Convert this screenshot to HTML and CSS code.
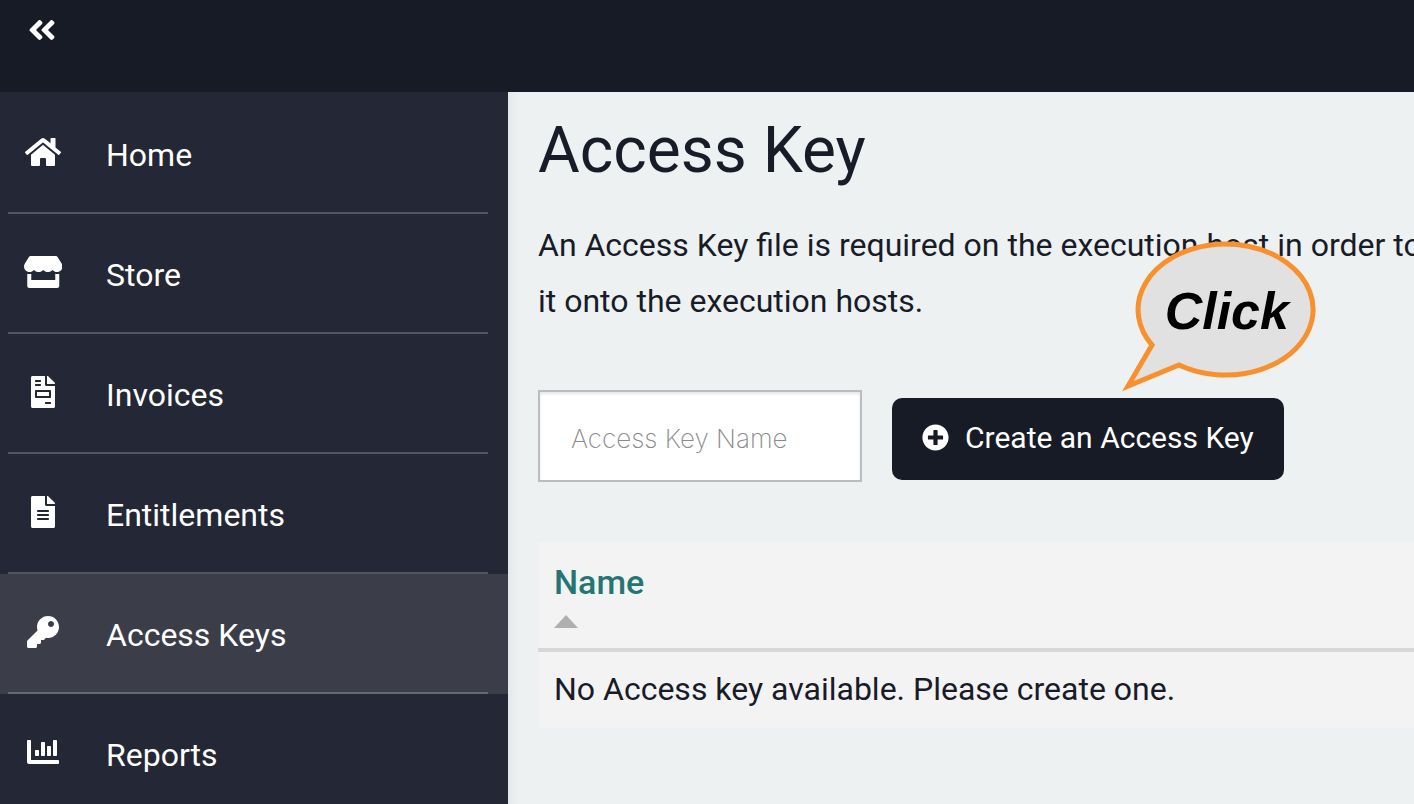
FILE: index.html
```html
<!DOCTYPE html>
<html lang="en">
<head>
<meta charset="utf-8">
<title>Access Key</title>
<link rel="stylesheet" href="styles.css">
</head>
<body>
<header class="topbar">
  <button class="collapse" type="button" aria-label="Collapse menu">
    <svg class="icon" viewBox="0 0 448 512" aria-hidden="true"><path d="M223.700 239l136-136c9.400-9.400 24.600-9.400 33.900 0l22.600 22.600c9.400 9.400 9.400 24.600 0 33.900L319.900 256l96.400 96.400c9.400 9.400 9.400 24.600 0 33.900L393.700 409c-9.400 9.400-24.600 9.400-33.900 0l-136-136c-9.500-9.400-9.500-24.600-.1-34zm-192 34l136 136c9.400 9.400 24.600 9.400 33.900 0l22.600-22.600c9.400-9.400 9.400-24.600 0-33.900L127.900 256l96.400-96.400c9.400-9.400 9.400-24.600 0-33.900L201.700 103c-9.400-9.400-24.600-9.400-33.900 0l-136 136c-9.500 9.400-9.500 24.600-.1 34z"/></svg>
  </button>
</header>
<div class="layout">
  <nav class="sidebar" aria-label="Main">
    <ul class="menu">
      <li class="menu-item"><a class="menu-link" href="#home">
        <span class="menu-icon"><svg class="icon" viewBox="0 0 576 512" aria-hidden="true"><path d="M280.370 148.260L96 300.110V464a16 16 0 0 0 16 16l112.060-.29a16 16 0 0 0 15.920-16V368a16 16 0 0 1 16-16h64a16 16 0 0 1 16 16v95.640a16 16 0 0 0 16 16.050L464 480a16 16 0 0 0 16-16V300L295.670 148.260a12.190 12.190 0 0 0-15.300 0zM571.600 251.470L488 182.560V44.050a12 12 0 0 0-12-12h-56a12 12 0 0 0-12 12v72.610L318.470 43a48 48 0 0 0-61 0L4.340 251.470a12 12 0 0 0-1.600 16.900l25.500 31A12 12 0 0 0 45.150 301l235.220-193.740a12.190 12.190 0 0 1 15.300 0L530.900 301a12 12 0 0 0 16.900-1.600l25.500-31a12 12 0 0 0-1.700-16.930z"/></svg></span>
        <span>Home</span></a></li>
      <li class="menu-item"><a class="menu-link" href="#store">
        <span class="menu-icon"><svg class="icon" viewBox="0 0 616 512" aria-hidden="true"><path d="M602 118.600L537.100 15C531.300 5.700 521 0 510 0H106C95 0 84.700 5.700 78.900 15L14 118.600c-33.500 53.500-3.800 127.900 58.800 136.400 4.500.6 9.100.9 13.700.9 29.600 0 55.800-13 73.800-33.100 18 20.100 44.300 33.100 73.800 33.100 29.600 0 55.800-13 73.800-33.100 18 20.100 44.300 33.100 73.800 33.100 29.600 0 55.800-13 73.800-33.100 18.100 20.100 44.300 33.100 73.800 33.100 4.700 0 9.200-.3 13.700-.9 62.800-8.400 92.600-82.800 59-136.400zM529.500 288c-10 0-19.900-1.500-29.500-3.800V384H116v-99.800c-9.600 2.200-19.500 3.800-29.500 3.800-6 0-12.100-.4-18-1.200-5.600-.8-11.100-2.100-16.400-3.600V480c0 17.700 14.300 32 32 32h448c17.700 0 32-14.300 32-32V283.200c-5.400 1.600-10.800 2.900-16.400 3.600-6.100.8-12.100 1.200-18.200 1.200z"/></svg></span>
        <span>Store</span></a></li>
      <li class="menu-item"><a class="menu-link" href="#invoices">
        <span class="menu-icon"><svg class="icon" viewBox="0 0 384 512" aria-hidden="true"><path d="M288 256H96v64h192v-64zm89-151L279.100 7c-4.500-4.500-10.600-7-17-7H256v128h128v-6.100c0-6.300-2.500-12.400-7-16.900zm-153 31V0H24C10.700 0 0 10.700 0 24v464c0 13.300 10.700 24 24 24h336c13.300 0 24-10.700 24-24V160H248c-13.200 0-24-10.800-24-24zM64 72c0-4.420 3.580-8 8-8h80c4.420 0 8 3.580 8 8v16c0 4.420-3.580 8-8 8H72c-4.420 0-8-3.580-8-8V72zm0 64c0-4.420 3.580-8 8-8h80c4.420 0 8 3.580 8 8v16c0 4.420-3.580 8-8 8H72c-4.420 0-8-3.580-8-8v-16zm256 304c0 4.420-3.580 8-8 8h-80c-4.420 0-8-3.580-8-8v-16c0-4.420 3.580-8 8-8h80c4.420 0 8 3.580 8 8v16zm0-200v96c0 8.840-7.160 16-16 16H80c-8.840 0-16-7.160-16-16v-96c0-8.840 7.160-16 16-16h224c8.840 0 16 7.160 16 16z"/></svg></span>
        <span>Invoices</span></a></li>
      <li class="menu-item"><a class="menu-link" href="#entitlements">
        <span class="menu-icon"><svg class="icon" viewBox="0 0 384 512" aria-hidden="true"><path d="M224 136V0H24C10.700 0 0 10.700 0 24v464c0 13.300 10.700 24 24 24h336c13.300 0 24-10.700 24-24V160H248c-13.200 0-24-10.800-24-24zm64 236c0 6.600-5.400 12-12 12H108c-6.600 0-12-5.400-12-12v-8c0-6.600 5.400-12 12-12h168c6.600 0 12 5.400 12 12v8zm0-64c0 6.600-5.400 12-12 12H108c-6.600 0-12-5.400-12-12v-8c0-6.600 5.400-12 12-12h168c6.600 0 12 5.400 12 12v8zm0-72v8c0 6.600-5.400 12-12 12H108c-6.600 0-12-5.400-12-12v-8c0-6.600 5.400-12 12-12h168c6.600 0 12 5.400 12 12zm96-114.100v6.100H256V0h6.100c6.400 0 12.500 2.500 17 7l97.900 98c4.500 4.500 7 10.600 7 16.900z"/></svg></span>
        <span>Entitlements</span></a></li>
      <li class="menu-item menu-item--active"><a class="menu-link" href="#access-keys" aria-current="page">
        <span class="menu-icon"><svg class="icon" viewBox="0 0 512 512" aria-hidden="true"><path d="M512 176C512 273.200 433.200 352 336 352c-11.220 0-22.190-1.060-32.830-3.070l-24.010 27.010A24 24 0 0 1 261.220 384H224v40c0 13.260-10.750 24-24 24h-40v40c0 13.260-10.750 24-24 24H24c-13.260 0-24-10.750-24-24v-78.060c0-6.370 2.530-12.470 7.030-16.970l161.800-161.800C163.110 213.810 160 195.270 160 176 160 78.800 238.800 0 336 0 433.490 0 512 78.510 512 176zM336 128c0 26.510 21.490 48 48 48s48-21.490 48-48-21.490-48-48-48-48 21.490-48 48z"/></svg></span>
        <span>Access Keys</span></a></li>
      <li class="menu-item"><a class="menu-link" href="#reports">
        <span class="menu-icon"><svg class="icon" viewBox="0 0 512 512" aria-hidden="true"><path d="M332.800 320h38.400c6.400 0 12.800-6.400 12.800-12.800V172.800c0-6.400-6.400-12.800-12.800-12.800h-38.400c-6.400 0-12.800 6.400-12.800 12.800v134.400c0 6.400 6.400 12.800 12.800 12.800zm96 0h38.400c6.400 0 12.800-6.400 12.800-12.800V76.800c0-6.400-6.400-12.800-12.800-12.800h-38.400c-6.400 0-12.800 6.400-12.800 12.800v230.400c0 6.400 6.400 12.800 12.800 12.800zm-288 0h38.400c6.400 0 12.800-6.400 12.800-12.800v-70.400c0-6.400-6.400-12.800-12.800-12.800h-38.400c-6.400 0-12.800 6.400-12.800 12.800v70.400c0 6.400 6.400 12.800 12.800 12.800zm96 0h38.400c6.400 0 12.800-6.400 12.800-12.800V108.800c0-6.400-6.400-12.800-12.800-12.800h-38.400c-6.400 0-12.800 6.400-12.800 12.800v198.400c0 6.400 6.400 12.800 12.800 12.800zM496 384H64V80c0-8.840-7.160-16-16-16H16C7.160 64 0 71.160 0 80v336c0 17.670 14.330 32 32 32h464c8.840 0 16-7.160 16-16v-32c0-8.840-7.160-16-16-16z"/></svg></span>
        <span>Reports</span></a></li>
    </ul>
  </nav>
  <main class="content">
    <h1 class="title">Access Key</h1>
    <p class="intro">An Access Key file is required on the execution host in order to<br>it onto the execution hosts.</p>
    <form class="create-form">
      <input class="name-input" type="text" placeholder="Access Key Name" aria-label="Access Key Name">
      <div class="create-action">
        <button class="create-button" type="button">
          <svg class="icon icon--small" viewBox="0 0 512 512" aria-hidden="true"><path d="M256 8C119 8 8 119 8 256s111 248 248 248 248-111 248-248S393 8 256 8zm144 276c0 6.600-5.400 12-12 12h-92v92c0 6.600-5.400 12-12 12h-56c-6.600 0-12-5.400-12-12v-92h-92c-6.600 0-12-5.400-12-12v-56c0-6.600 5.400-12 12-12h92v-92c0-6.600 5.400-12 12-12h56c6.600 0 12 5.400 12 12v92h92c6.600 0 12 5.400 12 12v56z"/></svg>
          <span>Create an Access Key</span>
        </button>
        <div class="callout">
          <svg class="callout-shape" viewBox="0 0 200 154" aria-hidden="true"><path d="M34 107A87.500 65.500 0 1 1 61 127L10 148Z"/></svg>
          <span class="callout-text">Click</span>
        </div>
      </div>
    </form>
    <table class="keys">
      <thead><tr><th scope="col">Name<svg class="sort" viewBox="0 0 24 13" aria-hidden="true"><path d="M12 0L24 13H0Z"/></svg></th></tr></thead>
      <tbody><tr><td>No Access key available. Please create one.</td></tr></tbody>
    </table>
  </main>
</div>
</body>
</html>
```
FILE: styles.css
```css
* {
  box-sizing: border-box;
}

body {
  display: flex;
  flex-direction: column;
  min-height: 100vh;
  margin: 0;
  overflow: hidden;
  background: #edf1f2;
  color: #181b28;
  font-family: Roboto, "Liberation Sans", sans-serif;
  font-size: 32px;
}

.icon {
  display: block;
  height: 32px;
  fill: currentColor;
}

.icon--small {
  height: 27px;
}

.topbar {
  height: 92px;
  padding: 14px 28px;
  background: #171b26;
}

.collapse {
  padding: 0;
  border: 0;
  background: none;
  color: #fff;
}

.layout {
  display: flex;
  flex: 1;
}

.sidebar {
  flex: none;
  width: 508px;
  background: #242735;
}

.menu {
  margin: 0;
  padding: 2px 0 0;
  list-style: none;
}

.menu-item {
  padding: 0 20px 0 8px;
}

.menu-item--active {
  background: #3b3e49;
}

.menu-link {
  display: flex;
  align-items: center;
  gap: 43px;
  height: 120px;
  padding: 4px 0 0 15px;
  border-bottom: 2px solid #52555f;
  color: #fff;
  text-decoration: none;
}

.menu-item--active .menu-link {
  border-bottom-color: #666972;
}

.menu-icon {
  display: flex;
  justify-content: center;
  width: 40px;
  padding-bottom: 6px;
}

.content {
  flex: 1;
  min-width: 0;
  padding: 20px 0 0 30px;
  overflow: hidden;
  box-shadow: inset 10px 0 10px -8px #dfe3e5;
}

.title {
  margin: 0;
  font-size: 64px;
  font-weight: 400;
  line-height: 78px;
}

.intro {
  margin: 27px 0 0;
  line-height: 56px;
  white-space: nowrap;
}

.create-form {
  display: flex;
  align-items: center;
  gap: 30px;
  margin-top: 61px;
}

.name-input {
  width: 324px;
  height: 92px;
  padding: 4px 31px 0;
  border: 2px solid #b9bdc2;
  border-radius: 0;
  background: #fff;
  box-shadow: inset 0 2px 3px #e6e6e6;
  font-family: Inter, sans-serif;
  font-size: 26px;
  font-weight: 200;
}

.name-input::placeholder {
  color: #8a8a8a;
}

.create-action {
  position: relative;
  padding-top: 6px;
}

.create-button {
  display: flex;
  align-items: center;
  gap: 16px;
  height: 82px;
  padding: 0 30px 4px;
  border: 0;
  border-radius: 10px;
  background: #171b26;
  color: #fff;
  font-family: inherit;
  font-size: 30px;
}

.callout {
  position: absolute;
  right: -34px;
  bottom: 88px;
  display: flex;
  align-items: center;
  justify-content: center;
  width: 200px;
  height: 154px;
}

.callout-shape {
  position: absolute;
  inset: 0;
  fill: #e1e1e1;
  stroke: #f7902d;
  stroke-width: 5;
}

.callout-text {
  position: relative;
  padding: 0 0 8px 18px;
  color: #000;
  font: italic bold 52px "Liberation Sans", sans-serif;
}

.keys {
  width: 100%;
  margin-top: 60px;
  border-collapse: collapse;
  background: #f3f3f3;
  text-align: left;
}

.keys th {
  padding: 20px 16px;
  border-bottom: 4px solid #d7d7d7;
  color: #247674;
  font-size: 34px;
  font-weight: 500;
  line-height: 40px;
}

.keys td {
  padding: 15px 16px 17px;
  line-height: 44px;
}

.sort {
  display: block;
  width: 24px;
  height: 13px;
  margin-top: 13px;
  fill: #afafaf;
}
```
